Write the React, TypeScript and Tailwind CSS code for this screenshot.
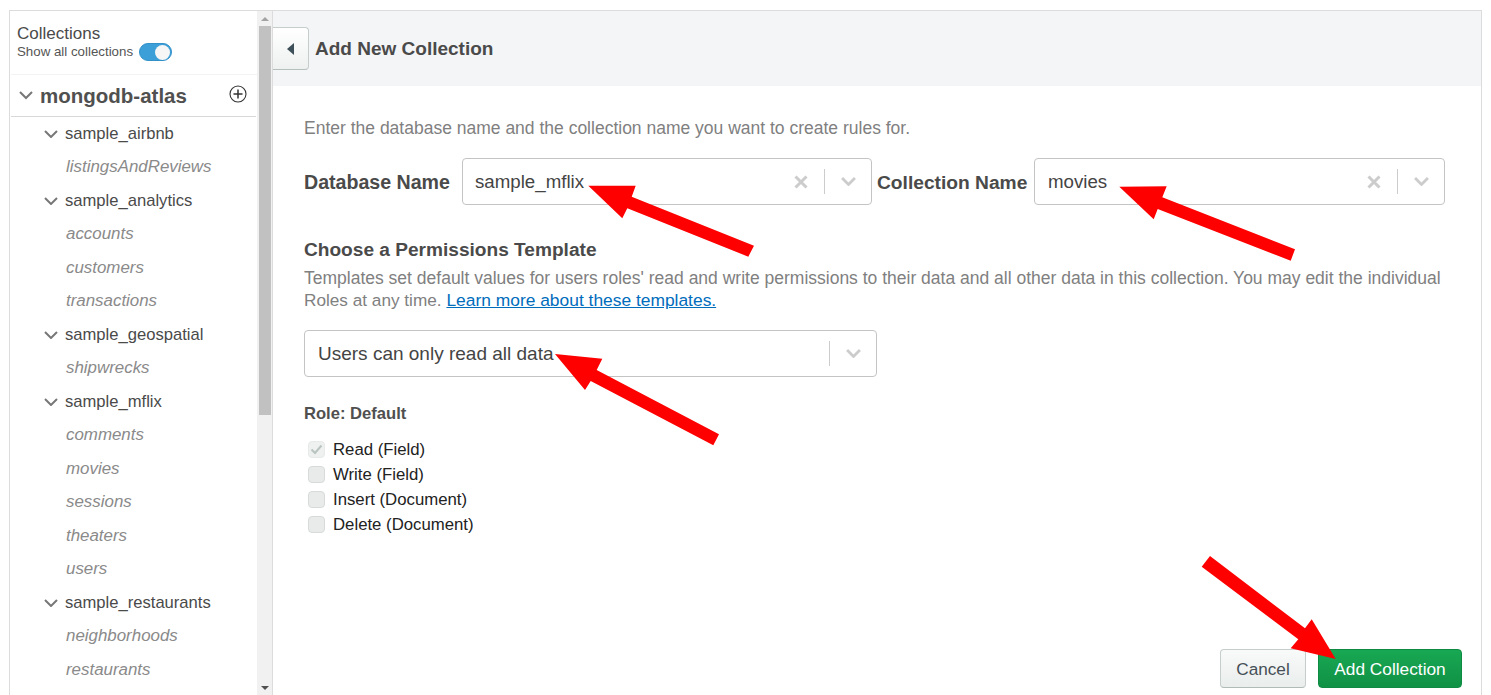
import React from "react";

const FONT = "[font-family:'Liberation_Sans',Arial,sans-serif]";

function Chevron({ className = "", color = "#777", w = 14, sw = 2 }: { className?: string; color?: string; w?: number; sw?: number }) {
  return (
    <svg width={w} height={w * 0.6} viewBox="0 0 14 8.4" className={className} fill="none">
      <path d="M1 1 L7 7 L13 1" stroke={color} strokeWidth={sw} />
    </svg>
  );
}

function Select({ value, width, clear = true, indent = "pl-3", size = "text-[18.7px]" }: { value: string; width: string; clear?: boolean; indent?: string; size?: string }) {
  return (
    <div className={`${width} h-[47px] shrink-0 flex items-center border border-[#c4c4c4] rounded-[4px] bg-white ${indent}`}>
      <span className={`flex-1 ${size} text-[#444] pt-[1px]`}>{value}</span>
      {clear && (
        <svg width="14" height="14" viewBox="0 0 14 14" className="mr-[16px]">
          <path d="M1.5 1.5 L12.5 12.5 M12.5 1.5 L1.5 12.5" stroke="#ccc" strokeWidth="3" />
        </svg>
      )}
      <div className="w-[1.5px] h-[25px] bg-[#ccc]" />
      <div className="w-[46px] flex justify-center">
        <Chevron color="#ccc" w={15} sw={2.6} />
      </div>
    </div>
  );
}

const tree: { name: string; items: string[] }[] = [
  { name: "sample_airbnb", items: ["listingsAndReviews"] },
  { name: "sample_analytics", items: ["accounts", "customers", "transactions"] },
  { name: "sample_geospatial", items: ["shipwrecks"] },
  { name: "sample_mflix", items: ["comments", "movies", "sessions", "theaters", "users"] },
  { name: "sample_restaurants", items: ["neighborhoods", "restaurants"] },
];

function Check({ label, checked = false }: { label: string; checked?: boolean }) {
  return (
    <div className="h-[25px] flex items-center">
      <div className={`w-[17px] h-[17px] ml-[4px] rounded-[4px] flex items-center justify-center border ${checked ? "bg-[#eef1f0] border-[#e6eae9]" : "bg-[#e8ebea] border-[#d6dbda]"}`}>
        {checked && (
          <svg width="13" height="11" viewBox="0 0 13 11" fill="none">
            <path d="M1.5 5.5 L5 9 L11.5 1.5" stroke="#b9c4c1" strokeWidth="2" />
          </svg>
        )}
      </div>
      <span className="ml-[8px] text-[16.75px] text-[#222]">{label}</span>
    </div>
  );
}

const arrows = [
  "588.3,185.7 635.7,185.7 631.7,196.7 754,245.7 748.3,256.7 627.3,208.3 622.3,218.3",
  "1119.3,186.7 1166.7,186.3 1162.3,197.3 1295,249.3 1290.7,260.7 1157.7,209 1153.7,219.3",
  "555,354 602.3,358.7 596.7,370 719,434.3 713.3,445.3 590.7,381 585,390",
  "1335.7,659 1311.7,619.3 1305,628.3 1210,556 1201.7,566.7 1298.3,639.3 1290.7,648.3",
];

export default function App() {
  return (
    <div className={`relative h-[695px] w-[1491px] overflow-hidden bg-white ${FONT}`}>
      <div className="absolute left-[9px] top-[10px] w-[1473px] h-[690px] border border-[#dcdcdc] flex">
        {/* Sidebar */}
        <div className="w-[247px] shrink-0 h-full overflow-hidden pl-[1px]">
          <div className="h-[64px] pl-[6px] pt-[13px] border-b border-[#f3f3f3]">
            <div className="text-[17px] leading-[20px] text-[#4a4a4a]">Collections</div>
            <div className="flex items-center mt-[-1px]">
              <span className="text-[13.3px] leading-[18px] text-[#555]">Show all collections</span>
              <div className="ml-[6px] w-[33px] h-[18px] rounded-full bg-[#3d9fd8] border border-[#3291c9] flex justify-end items-center pr-[1px]">
                <div className="w-[15px] h-[15px] rounded-full bg-[#f6f6f6]" />
              </div>
            </div>
          </div>
          <div className="h-[42px] flex items-center border-b border-[#d8d8d8] pl-[8px] pr-[8px] w-[245px]">
            <Chevron w={14} color="#777" />
            <span className="ml-[7px] pt-[1px] text-[20.5px] font-bold text-[#505050] flex-1">mongodb-atlas</span>
            <svg width="18" height="18" viewBox="0 0 18 18" fill="none" className="mb-[3px] mr-[1px]">
              <circle cx="9" cy="9" r="8" stroke="#333" strokeWidth="1.1" />
              <path d="M9 4.5 V13.5 M4.5 9 H13.5" stroke="#333" strokeWidth="1.5" />
            </svg>
          </div>
          {tree.map((db) => (
            <div key={db.name}>
              <div className="h-[33.5px] flex items-center pl-[33px]">
                <Chevron w={14} color="#777" />
                <span className="ml-[7px] pt-[2px] text-[16.6px] text-[#4a4a4a]">{db.name}</span>
              </div>
              {db.items.map((c) => (
                <div key={c} className="h-[33.5px] flex items-center pl-[55px] pb-[1px] text-[16.9px] italic text-[#8a8a8a]">
                  {c}
                </div>
              ))}
            </div>
          ))}
        </div>
        {/* Scrollbar */}
        <div className="w-[15px] shrink-0 h-[684px] bg-[#f1f1f1] flex flex-col items-center">
          <div className="h-[15px] flex items-center justify-center">
            <div className="w-0 h-0 border-x-[4px] border-x-transparent border-b-[4px] border-b-[#a3a3a3]" />
          </div>
          <div className="w-[12px] h-[389px] bg-[#c1c1c1]" />
          <div className="flex-1" />
          <div className="h-[15px] flex items-center justify-center">
            <div className="w-0 h-0 border-x-[4px] border-x-transparent border-t-[4px] border-t-[#505050]" />
          </div>
        </div>
        {/* Main */}
        <div className="flex-1 min-w-0 border-l border-[#dcdcdc] relative">
          <div className="h-[75px] bg-[#f4f5f7] flex items-start">
            <button className="mt-[16px] w-[36px] h-[43px] bg-gradient-to-b from-[#ffffff] to-[#eef1f0] border border-l-0 border-[#c5cecb] border-b-[#b5bfbc] rounded-r-[4px] flex items-center justify-center">
              <div className="w-0 h-0 border-y-[6px] border-y-transparent border-r-[7px] border-r-[#3d4f58]" />
            </button>
            <span className="ml-[6px] mt-[26px] text-[19px] leading-[24px] font-bold text-[#4a4a4a]">Add New Collection</span>
          </div>
          <div className="pl-[31px] pr-[36px]">
            <p className="mt-[31px] text-[17.5px] leading-[22px] text-[#808080]">
              Enter the database name and the collection name you want to create rules for.
            </p>
            <div className="mt-[19px] flex items-center">
              <span className="w-[158px] text-[19.6px] font-bold text-[#4a4a4a] pt-[3px]">Database Name</span>
              <Select value="sample_mflix" width="w-[410px]" />
              <span className="ml-[5px] w-[157px] text-[19.2px] whitespace-nowrap font-bold text-[#4a4a4a] pt-[3px]">Collection Name</span>
              <Select value="movies" width="w-[411px]" indent="pl-[13px]" />
            </div>
            <div className="mt-[33px] text-[19.1px] leading-[24px] font-bold text-[#4a4a4a]">Choose a Permissions Template</div>
            <p className="mt-[5px] text-[17.5px] leading-[22px] text-[#808080]">
              Templates set default values for users roles' read and write permissions to their data and all other data in this collection. You may edit the individual{" "}
              <span className="text-[17.2px]">Roles at any time.</span>{" "}
              <a className="text-[17.4px] text-[#006cbc] underline">Learn more about these templates.</a>
            </p>
            <div className="mt-[19px]">
              <Select value="Users can only read all data" width="w-[573px]" clear={false} indent="pl-[13px]" size="text-[19px]" />
            </div>
            <div className="mt-[27px] text-[16.6px] leading-[20px] font-bold text-[#505050]">Role: Default</div>
            <div className="mt-[13px]">
              <Check label="Read (Field)" checked />
              <Check label="Write (Field)" />
              <Check label="Insert (Document)" />
              <Check label="Delete (Document)" />
            </div>
          </div>
          <div className="absolute right-[19px] top-[638px] flex gap-[12px]">
            <button className="w-[86px] h-[39px] pt-[2px] rounded-[4px] bg-gradient-to-b from-[#f9fbfa] to-[#e9edec] border border-[#c5cecb] border-b-[#b0bab7] text-[17.2px] text-[#464f56]">
              Cancel
            </button>
            <button className="w-[144px] h-[39px] pt-[2px] rounded-[4px] bg-gradient-to-b from-[#18a853] to-[#109145] border border-[#0f8a42] text-[17.3px] text-white">
              Add Collection
            </button>
          </div>
        </div>
      </div>
      <svg className="absolute inset-0 pointer-events-none" width="1491" height="695" viewBox="0 0 1491 695">
        {arrows.map((p) => (
          <polygon key={p} points={p} fill="#ff0000" />
        ))}
      </svg>
    </div>
  );
}
